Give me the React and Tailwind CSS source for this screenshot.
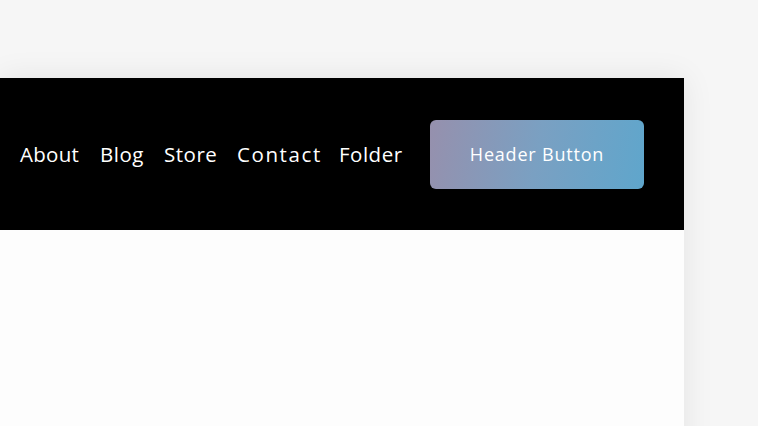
export default function App() {
  const items = [
    { t: "About", c: "w-[59px] tracking-[0.3px]" },
    { t: "Blog", c: "w-[43px] tracking-[0.5px]" },
    { t: "Store", c: "w-[52px] tracking-[0.5px]" },
    { t: "Contact", c: "w-[81px] tracking-[1.6px]" },
    { t: "Folder", c: "w-[61px] tracking-[0.5px]" },
  ];
  return (
    <div className="h-[426px] w-[758px] overflow-hidden bg-[#f6f6f6] pt-[78px]" style={{ fontFamily: '"Open Sans", sans-serif' }}>
      <div className="w-[684px] h-[400px] bg-[#fdfdfd] shadow-[0_0_30px_rgba(0,0,0,0.08)]">
        <div className="h-[152px] bg-black flex items-center pl-[20px]">
          <nav className="flex items-center gap-[21px] text-white text-[20.5px]">
            {items.map((i) => (
              <span key={i.t} className={`leading-none whitespace-nowrap ${i.c}`}>{i.t}</span>
            ))}
          </nav>
          <button className="ml-[30px] w-[214px] h-[69px] rounded-[6px] bg-[linear-gradient(100deg,#9690ad_0%,#7aa0c2_50%,#5fa6cc_100%)] text-white text-[18px] tracking-[0.8px]">
            Header Button
          </button>
        </div>
      </div>
    </div>
  );
}
